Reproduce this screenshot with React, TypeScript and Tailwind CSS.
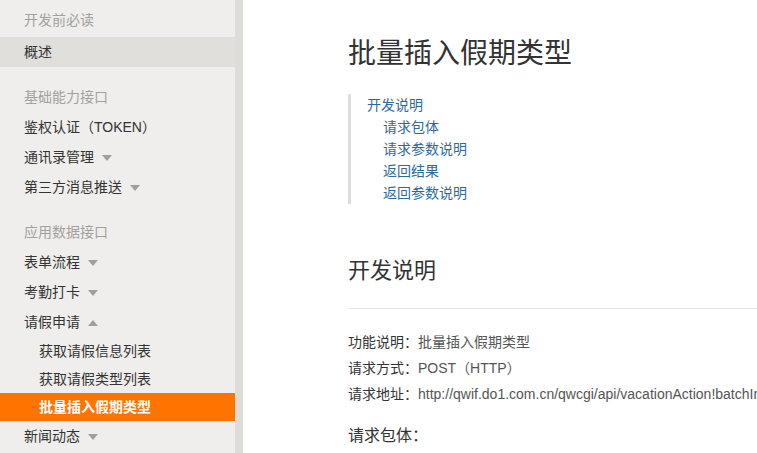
import React from 'react';

type NavItem = {
  label: string;
  caret?: 'down' | 'up';
  sub?: boolean;
  active?: boolean;
  current?: boolean;
};

type NavGroup = {
  title: string;
  first?: boolean;
  items: NavItem[];
};

const groups: NavGroup[] = [
  { title: '开发前必读', first: true, items: [{ label: '概述', current: true }] },
  {
    title: '基础能力接口',
    items: [
      { label: '鉴权认证（TOKEN）' },
      { label: '通讯录管理', caret: 'down' },
      { label: '第三方消息推送', caret: 'down' },
    ],
  },
  {
    title: '应用数据接口',
    items: [
      { label: '表单流程', caret: 'down' },
      { label: '考勤打卡', caret: 'down' },
      { label: '请假申请', caret: 'up' },
      { label: '获取请假信息列表', sub: true },
      { label: '获取请假类型列表', sub: true },
      { label: '批量插入假期类型', sub: true, active: true },
      { label: '新闻动态', caret: 'down' },
    ],
  },
];

const toc = ['请求包体', '请求参数说明', '返回结果', '返回参数说明'];

function Caret({ dir }: { dir: 'down' | 'up' }) {
  return dir === 'down' ? (
    <span className="ml-2 inline-block h-0 w-0 border-x-[5px] border-t-[6px] border-x-transparent border-t-[#a19f9c]" />
  ) : (
    <span className="ml-2 inline-block h-0 w-0 border-x-[5px] border-b-[6px] border-x-transparent border-b-[#a19f9c]" />
  );
}

function Sidebar() {
  return (
    <aside className="flex h-full w-[243px] shrink-0 bg-[#dddcd8]">
      <nav className="h-full w-[235px] overflow-hidden bg-[#efeeec] text-[14px]">
        {groups.map((g) => (
          <div key={g.title}>
            <div
              className={
                g.first
                  ? 'flex h-[37px] items-center pt-[4px] pl-6 text-[#a3a19e]'
                  : 'mt-[15px] flex h-[30px] items-center pt-px pl-6 text-[#a3a19e]'
              }
            >
              {g.title}
            </div>
            {g.items.map((it) => (
              <div
                key={it.label}
                className={[
                  'flex items-center pt-px',
                  it.sub ? 'h-[28px] pl-[39px]' : 'h-[30px] pl-6',
                  it.active
                    ? 'bg-[#ff7300] font-bold text-white'
                    : it.current
                      ? 'bg-[#e0dfdb] text-[#333]'
                      : 'text-[#333]',
                ].join(' ')}
              >
                {it.label}
                {it.caret && <Caret dir={it.caret} />}
              </div>
            ))}
          </div>
        ))}
      </nav>
    </aside>
  );
}

export default function App() {
  return (
    <div
      className="flex h-[453px] w-full overflow-hidden bg-white"
      style={{ fontFamily: '"Liberation Sans", "Noto Sans CJK SC", sans-serif' }}
    >
      <Sidebar />
      <main className="min-w-0 flex-1 overflow-hidden pl-[105px] pt-[37px] text-[#333]">
        <h1 className="text-[28px] leading-[34px] font-normal">批量插入假期类型</h1>

        {/* TOC */}
        <div className="mt-[23px] border-l-[3px] border-[#dddddd] pl-[16px] text-[14px] leading-[22px] text-[#2d6a9a]">
          <div>开发说明</div>
          <ul className="pl-[16px]">
            {toc.map((t) => (
              <li key={t}>{t}</li>
            ))}
          </ul>
        </div>

        <h2 className="mt-[52px] text-[22px] leading-[30px] font-normal">开发说明</h2>
        <div className="mt-[22px] h-px bg-[#e5e5e5]" />

        <div className="mt-[20px] whitespace-nowrap text-[14px] leading-[26px]">
          <div>
            功能说明：<span className="text-[#555]">批量插入假期类型</span>
          </div>
          <div>
            请求方式：<span className="text-[#555]">POST（HTTP）</span>
          </div>
          <div>
            请求地址：
            <span className="text-[#555]">
              http://qwif.do1.com.cn/qwcgi/api/vacationAction!batchInsertVacationType.action
            </span>
          </div>
        </div>

        <h3 className="mt-[17px] text-[16px] leading-[24px] font-normal">请求包体：</h3>
      </main>
    </div>
  );
}
